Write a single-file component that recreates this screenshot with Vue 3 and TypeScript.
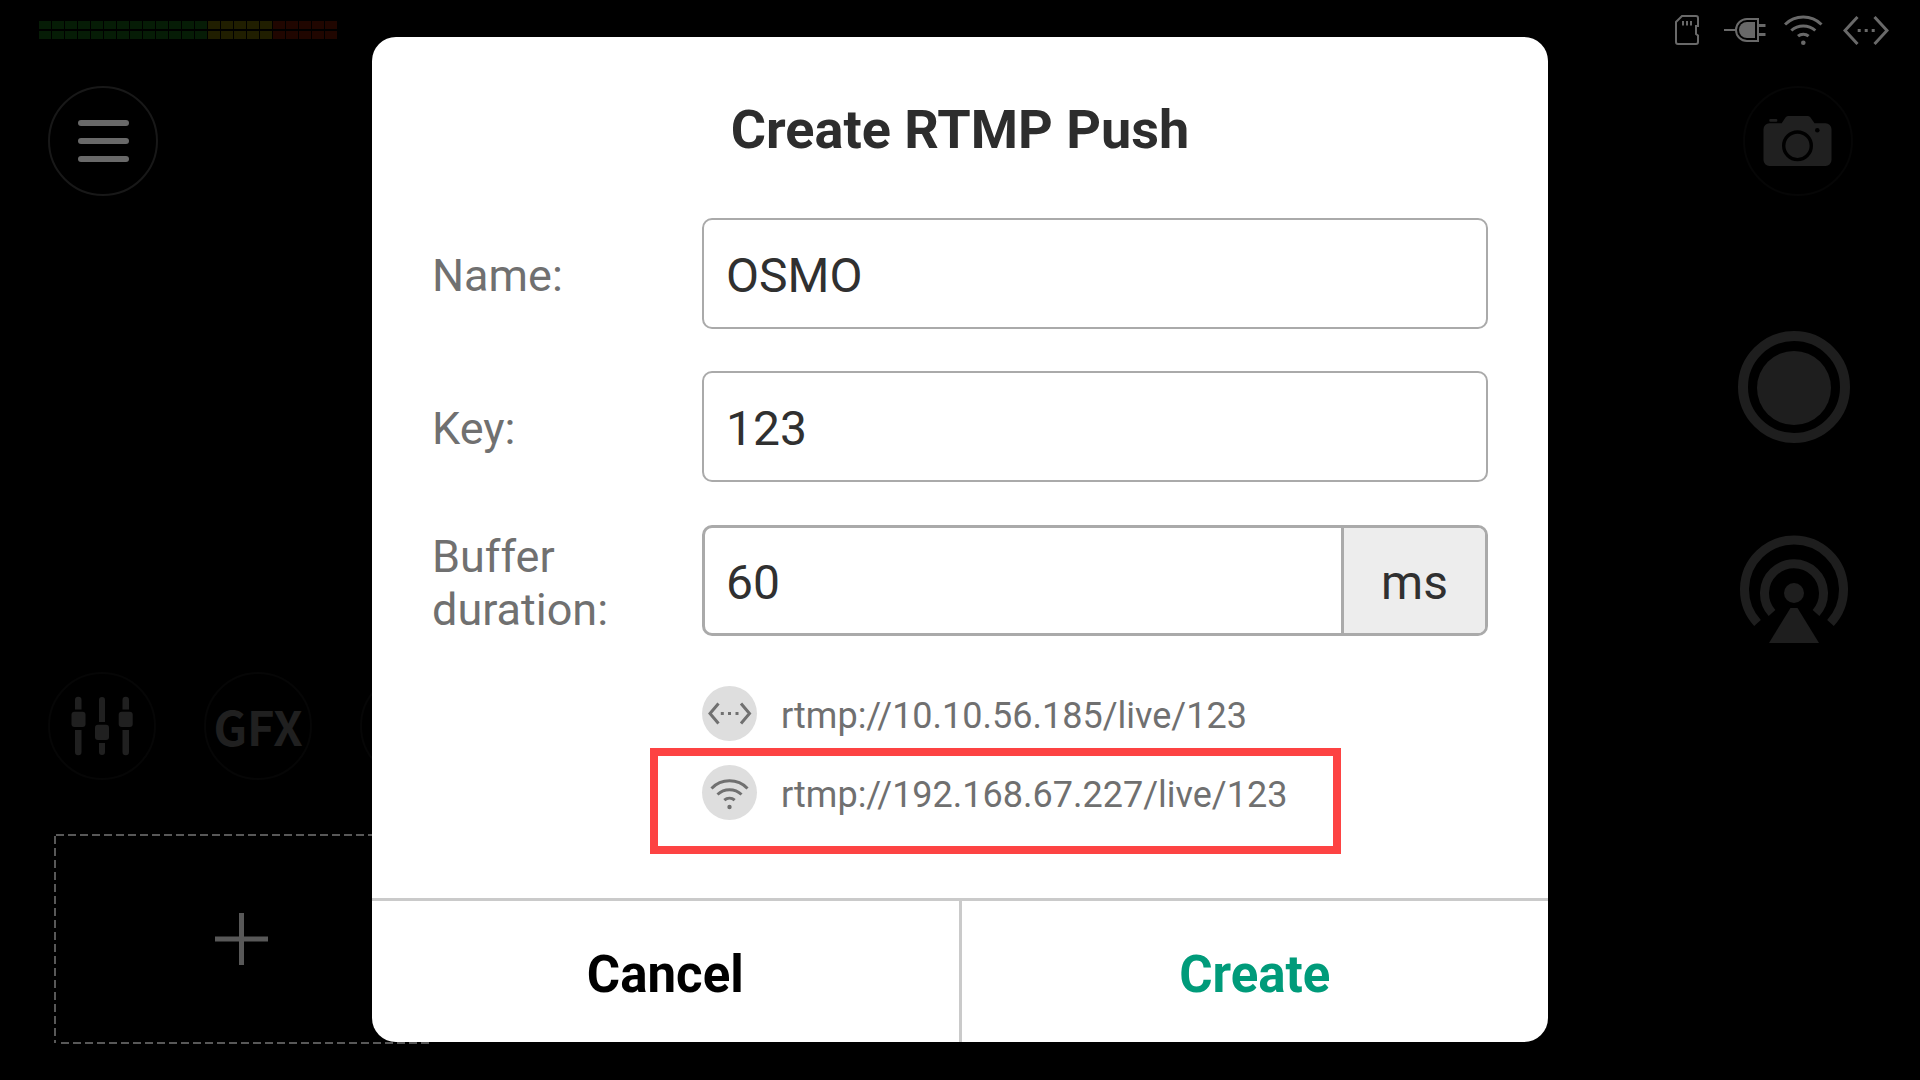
<script setup lang="ts">
import { ref } from 'vue'

type Level = 'low' | 'mid' | 'high'

const levels: Level[] = [
  ...Array<Level>(13).fill('low'),
  ...Array<Level>(5).fill('mid'),
  ...Array<Level>(5).fill('high'),
]

const name = ref('OSMO')
const streamKey = ref('123')
const buffer = ref('60')
</script>

<template>
  <div class="stage">
    <div class="left">
      <div class="meter" aria-label="Audio level">
        <div v-for="channel in 2" :key="channel" class="channel">
          <span v-for="(level, i) in levels" :key="i" :class="['cell', level]"></span>
        </div>
      </div>
      <button class="round menu" type="button" aria-label="Menu">
        <span class="bar"></span>
        <span class="bar"></span>
        <span class="bar"></span>
      </button>
      <div class="tools">
        <button class="round tool" type="button" aria-label="Mixer">
          <svg width="108" height="108" viewBox="0 0 108 108" fill="currentColor">
            <path d="M27 37.500V28a3 3 0 0 1 6.500 0v9.500zM27 58h6.500v22a3 3 0 0 1-6.500 0zM51 50V28a3 3 0 0 1 6 0v22zM51 71h6v9a3 3 0 0 1-6 0zM74.500 37.500V28a3 3 0 0 1 6.500 0v9.500zM74.500 58H81v22a3 3 0 0 1-6.500 0z" />
            <rect x="23.500" y="39.700" width="14" height="15.300" rx="3" />
            <rect x="47" y="52.700" width="14" height="15.300" rx="3" />
            <rect x="70.700" y="39.700" width="14" height="15.300" rx="3" />
          </svg>
        </button>
        <button class="round tool gfx" type="button">GFX</button>
        <button class="round tool" type="button" aria-label="More tools"></button>
      </div>
      <button class="add" type="button" aria-label="Add source">
        <svg width="375" height="210" viewBox="0 0 375 210" fill="none" stroke="currentColor">
          <path d="M2 1H374M1 2V209M7 209H375" stroke-width="2" stroke-dasharray="8 4" />
          <path d="M161 105H214M187.500 79V131" stroke-width="5" />
        </svg>
      </button>
    </div>

    <div class="right">
      <div class="status">
        <svg width="31" height="30" viewBox="0 0 31 30" fill="none" stroke="currentColor" stroke-width="2">
          <path d="M7 1H21a2 2 0 0 1 2 2V11H21V19L23 20.500V27a2 2 0 0 1-2 2H3a2 2 0 0 1-2-2V7Z" />
          <path d="M8 6v4.500M12 6v4.500M16 6v4.500" />
        </svg>
        <svg width="42" height="24" viewBox="0 0 42 24" fill="none" stroke="currentColor" stroke-width="2">
          <path d="M0 12H12M34 1H23a11 11 0 0 0 0 22H34Z" />
          <path d="M31 4H23a8 8 0 0 0 0 16H31Z" fill="currentColor" stroke="none" />
          <path d="M35 7.500H41.500M35 16.500H41.500" stroke-width="3" />
        </svg>
        <svg width="41" height="31" viewBox="0 0 41 31" fill="none" stroke="currentColor" stroke-width="3">
          <path d="M1 9.500A26 26 0 0 1 37.500 9.500M7.300 15.500A18 18 0 0 1 31.300 15.500M14 21.200A8 8 0 0 1 24.600 21.200" />
          <circle cx="19.300" cy="27.700" r="2.300" fill="currentColor" stroke="none" />
        </svg>
        <svg width="46" height="29" viewBox="0 0 46 29" fill="none" stroke="currentColor" stroke-width="3">
          <path d="M14.500 1L2 14.500L14.500 28M31.500 1L44 14.500L31.500 28M14.700 14.500h3M21.700 14.500h3M28.700 14.500h3" />
        </svg>
      </div>
      <button class="round camera" type="button" aria-label="Snapshot">
        <svg width="110" height="110" viewBox="0 0 110 110" fill="currentColor">
          <path d="M26.500 37.300H38.700L42.500 31.500Q43.500 30 45 30H65Q66.500 30 67.500 31.500L71.500 37.300H82.500a6 6 0 0 1 6 6V74a6 6 0 0 1-6 6H26.500a6 6 0 0 1-6-6V43.300a6 6 0 0 1 6-6Z" />
          <rect x="26.300" y="33" width="8" height="2.700" rx="1" />
          <circle cx="54.500" cy="59.800" r="13.800" fill="none" stroke="#000" stroke-width="3.400" />
          <circle cx="74.300" cy="44.300" r="2.300" fill="#000" />
        </svg>
      </button>
      <button class="capture record" type="button" aria-label="Record">
        <svg width="112" height="112" viewBox="0 0 112 112" fill="currentColor">
          <circle cx="56" cy="56" r="51" fill="none" stroke="currentColor" stroke-width="10" />
          <circle cx="56" cy="57" r="37" />
        </svg>
      </button>
      <button class="capture live" type="button" aria-label="Go live">
        <svg width="112" height="108" viewBox="0 0 112 108" fill="none" stroke="currentColor" stroke-width="9">
          <path d="M19.500 88A49.500 49.500 0 1 1 92.500 88" />
          <path d="M34 78A29.500 29.500 0 1 1 78 78" />
          <path d="M52.500 73H59.500L81 108H31Z" fill="currentColor" stroke="none" />
          <circle cx="56" cy="58" r="10" fill="currentColor" stroke="none" />
        </svg>
      </button>
    </div>

    <div class="overlay">
      <form class="dialog" role="dialog" aria-labelledby="dialog-title" @submit.prevent>
        <h1 id="dialog-title">Create RTMP Push</h1>
        <div class="fields">
          <div class="row">
            <label for="name">Name:</label>
            <div class="field"><input id="name" v-model="name" type="text" /></div>
          </div>
          <div class="row">
            <label for="key">Key:</label>
            <div class="field"><input id="key" v-model="streamKey" type="text" /></div>
          </div>
          <div class="row tall">
            <label for="buffer">Buffer duration:</label>
            <div class="field thick">
              <input id="buffer" v-model="buffer" type="text" inputmode="numeric" />
              <span class="unit">ms</span>
            </div>
          </div>
        </div>
        <ul class="urls">
          <li>
            <svg class="badge" width="55" height="55" viewBox="0 0 55 55" fill="none" stroke="currentColor" stroke-width="3">
              <path d="M16.500 17.500L8 27.500L16.500 37.500M39 17.500L47.500 27.500L39 37.500M18.800 27.500h3M26 27.500h3M33.500 27.500h3" />
            </svg>
            <span>rtmp://10.10.56.185/live/123</span>
          </li>
          <li class="marked">
            <svg class="badge" width="55" height="55" viewBox="0 0 55 55" fill="none" stroke="currentColor" stroke-width="3">
              <path d="M9.500 23.500A25 25 0 0 1 45.500 23.500M15.500 29.500A17.500 17.500 0 0 1 39.500 29.500M22.300 35.200A8 8 0 0 1 32.700 35.200" />
              <circle cx="27.500" cy="42" r="2.200" fill="currentColor" stroke="none" />
            </svg>
            <span>rtmp://192.168.67.227/live/123</span>
          </li>
        </ul>
        <div class="actions">
          <button class="cancel" type="button">Cancel</button>
          <button class="primary" type="submit">Create</button>
        </div>
      </form>
    </div>
  </div>
</template>

<style>
body {
  background: #000;
}
</style>

<style scoped>
*,
*::after {
  box-sizing: border-box;
}

.stage {
  position: relative;
  display: flex;
  justify-content: space-between;
  min-height: 100vh;
  background: #000;
  font-family: Roboto, "Liberation Sans", sans-serif;
}

svg {
  display: block;
  flex: none;
}

button {
  padding: 0;
  border: 0;
  background: none;
  color: inherit;
  font-family: inherit;
  cursor: pointer;
}

.left {
  display: flex;
  flex-direction: column;
  align-items: flex-start;
  padding: 21px 0 36px 39px;
}

.meter {
  display: flex;
  flex-direction: column;
  gap: 2px;
}

.channel {
  display: flex;
  gap: 1px;
}

.cell {
  width: 12px;
  height: 8px;
}

.low {
  background: #061c06;
}

.mid {
  background: #201e00;
}

.high {
  background: #200600;
}

.round {
  display: flex;
  align-items: center;
  justify-content: center;
  width: 110px;
  height: 110px;
  border: 2px solid #060606;
  border-radius: 50%;
  color: #202020;
}

.menu {
  flex-direction: column;
  gap: 12px;
  margin: 47px 0 0 9px;
  border-color: #181818;
}

.bar {
  width: 51px;
  height: 6px;
  border-radius: 3px;
  background: #696969;
}

.tools {
  display: flex;
  gap: 48px;
  margin: auto 0 54px 9px;
}

.tool {
  width: 108px;
  height: 108px;
}

.gfx {
  font-family: "Noto Sans CJK SC", "Noto Sans", sans-serif;
  font-size: 47px;
  font-weight: 700;
  line-height: 60px;
}

.add {
  margin-left: 15px;
  color: #585858;
}

.right {
  display: flex;
  flex-direction: column;
  align-items: flex-end;
  padding: 14px 31px 0 0;
}

.status {
  display: flex;
  align-items: center;
  gap: 18px;
  height: 32px;
  color: #696969;
}

.camera {
  margin: 40px 36px 0 0;
}

.capture {
  margin-right: 39px;
  color: #1e1e1e;
}

.record {
  margin-top: 135px;
}

.live {
  margin-top: 92px;
}

.overlay {
  position: absolute;
  inset: 0;
  display: flex;
  align-items: center;
  justify-content: center;
  padding-bottom: 1px;
}

.dialog {
  width: 61.25%;
  overflow: hidden;
  border-radius: 24px;
  background: #fff;
  color: #303030;
}

h1 {
  margin: 61px 0 56px;
  color: #2d2d2d;
  font-size: 54px;
  font-weight: 700;
  line-height: 64px;
  text-align: center;
}

.fields {
  display: flex;
  flex-direction: column;
  gap: 42px;
  padding: 0 60px;
}

.row {
  display: flex;
  align-items: center;
  height: 111px;
}

.tall {
  height: 113px;
}

label {
  flex: none;
  width: 270px;
  padding: 4px 60px 0 0;
  color: #707070;
  font-size: 45px;
  line-height: 53px;
}

.field {
  display: flex;
  flex: 1;
  min-width: 0;
  height: 111px;
  overflow: hidden;
  border: 2px solid #aaa;
  border-radius: 10px;
}

.thick {
  border-width: 3px;
}

input {
  flex: 1;
  min-width: 0;
  padding: 4px 22px 0;
  border: 0;
  outline: 0;
  background: transparent;
  color: #303030;
  font-family: inherit;
  font-size: 48px;
}

.thick input {
  padding-left: 21px;
}

.unit {
  display: flex;
  align-items: center;
  justify-content: center;
  width: 144px;
  padding-top: 4px;
  border-left: 3px solid #aaa;
  background: #ededed;
  font-size: 48px;
}

.urls {
  display: flex;
  flex-direction: column;
  gap: 24px;
  margin: 49px 60px 78px 330px;
  padding: 0;
  list-style: none;
  color: #707070;
  font-size: 36px;
}

.urls li {
  display: flex;
  align-items: center;
  gap: 24px;
  height: 55px;
}

.urls span {
  padding-top: 5px;
}

.badge {
  border-radius: 50%;
  background: #dedede;
}

.marked {
  position: relative;
}

/* Callout frame around the Wi-Fi address */
.marked::after {
  content: "";
  position: absolute;
  top: -17px;
  left: -52px;
  width: 691px;
  height: 106px;
  border: 8px solid #fd4343;
}

.actions {
  display: flex;
  border-top: 3px solid #cacaca;
}

.actions button {
  flex: 1;
  height: 141px;
  padding-top: 6px;
  color: #000;
  font-size: 51px;
  font-weight: 700;
}

.actions .cancel {
  border-right: 3px solid #cacaca;
}

.actions .primary {
  color: #009b7a;
}
</style>
